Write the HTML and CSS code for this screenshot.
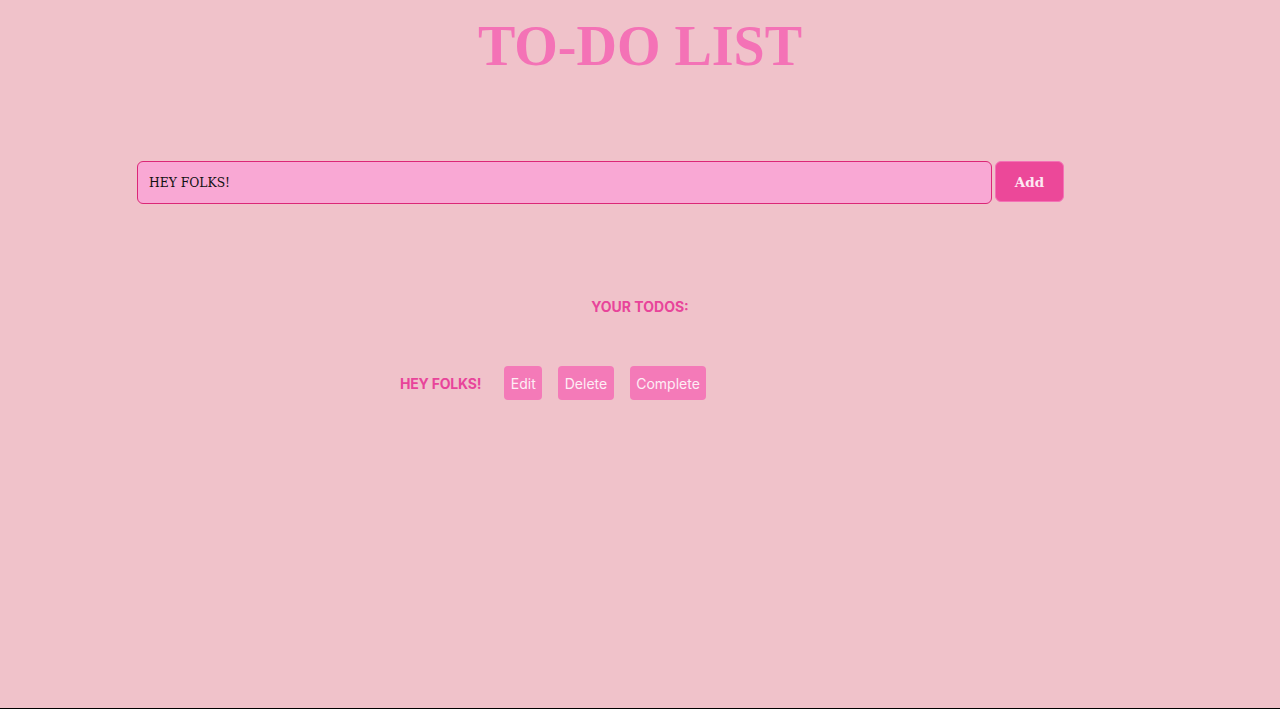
FILE: index.html
```
<!DOCTYPE html>
<html>
<head>
<meta charset="utf-8">
<link rel="stylesheet" href="styles.css">
</head>
<body>
<div class="page">
  <h1 class="title">TO-DO LIST</h1>
  <form class="add-form">
    <input class="todo-input" type="text" value="HEY FOLKS!">
    <button class="add-btn" type="button">Add</button>
  </form>
  <h2 class="todos-heading">YOUR TODOS:</h2>
  <div class="todo-row">
    <span class="todo-text">HEY FOLKS!</span>
    <button class="todo-btn edit">Edit</button>
    <button class="todo-btn">Delete</button>
    <button class="todo-btn">Complete</button>
  </div>
</div>
</body>
</html>
```
FILE: styles.css
```
html, body {
  margin: 0;
  padding: 0;
  background: #000;
}
.page {
  height: 708px;
  background: #f0c2ca;
  font-family: Inter, "Noto Sans", sans-serif;
  display: flex;
  flex-direction: column;
  overflow: hidden;
}
.title {
  margin: 14px 0 0;
  text-align: center;
  font-family: "Liberation Serif", Georgia, serif;
  font-weight: bold;
  font-size: 56px;
  line-height: 64px;
  color: #f472b6;
}
.add-form {
  display: flex;
  align-items: flex-start;
  gap: 3px;
  margin: 83px 0 0 137px;
}
.todo-input {
  width: 855px;
  height: 43px;
  box-sizing: border-box;
  background: #f9a8d4;
  border: 1px solid #db2777;
  border-radius: 6px;
  padding: 0 11px;
  font-family: "DejaVu Serif", serif;
  font-size: 12.3px;
  color: #111;
  outline: none;
}
.add-btn {
  width: 69px;
  height: 41px;
  background: #ec4899;
  border: 1px solid #f472b6;
  border-radius: 6px;
  color: #fde8f2;
  font-family: "DejaVu Serif", serif;
  font-weight: bold;
  font-size: 13.5px;
}
.todos-heading {
  margin: 94px 0 0;
  text-align: center;
  font-size: 14px;
  font-weight: 700;
  color: #e8449a;
  line-height: 18px;
}
.todo-row {
  display: flex;
  align-items: center;
  gap: 16px;
  margin: 50px 0 0 400px;
}
.todo-text {
  font-size: 14px;
  font-weight: 700;
  color: #e8449a;
  letter-spacing: -0.2px;
  margin-right: 7px;
}
.todo-btn {
  height: 34px;
  padding: 0 6.5px;
  background: #f47ab8;
  border: none;
  border-radius: 4px;
  color: #fdeef5;
  font-family: Inter, "Noto Sans", sans-serif;
  font-size: 14px;
}
```
